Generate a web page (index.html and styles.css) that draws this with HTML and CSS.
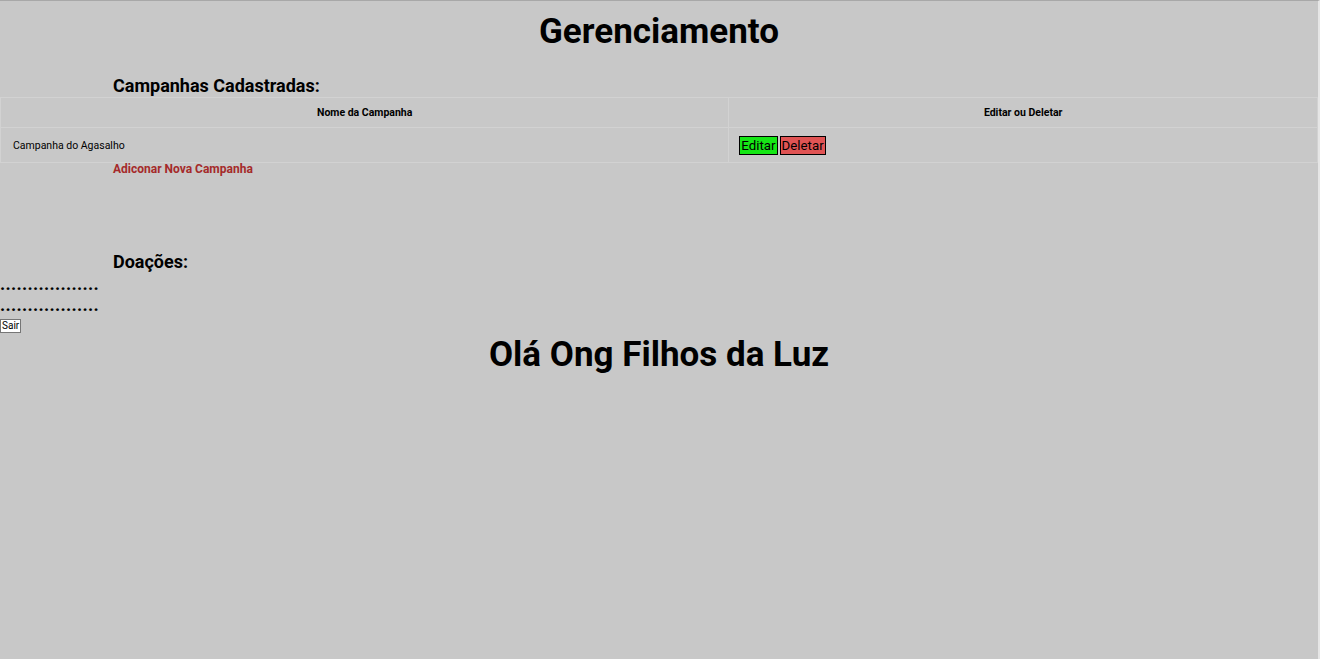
FILE: index.html
```html
<!DOCTYPE html>
<html lang="pt-BR">
<head>
<meta charset="utf-8">
<title>Gerenciamento</title>
<link rel="stylesheet" href="styles.css">
</head>
<body>
<div class="page">
  <h1 class="title">Gerenciamento</h1>
  <section class="campaigns">
    <h2 class="section-title">Campanhas Cadastradas:</h2>
    <table class="table">
      <thead>
        <tr>
          <th class="col-name">Nome da Campanha</th>
          <th class="col-actions">Editar ou Deletar</th>
        </tr>
      </thead>
      <tbody>
        <tr>
          <td class="cell-name">Campanha do Agasalho</td>
          <td class="cell-actions">
            <button class="btn btn-edit">Editar</button><button class="btn btn-delete">Deletar</button>
          </td>
        </tr>
      </tbody>
    </table>
    <a class="add-link" href="#">Adiconar Nova Campanha</a>
  </section>
  <section class="donations">
    <h2 class="section-title">Doações:</h2>
    <div class="dots">..................</div>
    <div class="dots">..................</div>
  </section>
  <button class="btn-exit">Sair</button>
  <h1 class="greeting">Olá Ong Filhos da Luz</h1>
</div>
</body>
</html>
```
FILE: styles.css
```css
html, body {
  margin: 0;
  padding: 0;
  background: #c8c8c8;
  height: 100%;
}
body {
  font-family: Roboto, "Liberation Sans", sans-serif;
  color: #000;
}
.page {
  min-height: 100%;
  box-sizing: border-box;
  border-top: 1px solid #a8a8a8;
  border-right: 2px solid #e6e6e6;
  padding-top: 1px;
}
.title {
  margin: 0;
  padding-top: 10px;
  text-align: center;
  font-size: 35px;
  font-weight: 700;
  line-height: 40px;
}
.section-title {
  margin: 0;
  padding-left: 113px;
  font-size: 18px;
  font-weight: 700;
  line-height: 22px;
}
.campaigns .section-title {
  margin-top: 23px;
}
.table {
  width: 100%;
  border-collapse: collapse;
  margin-top: 0;
}
.table th, .table td {
  border: 1px solid #d2d2d2;
}
.table th {
  font-size: 10.5px;
  font-weight: 700;
  height: 29px;
  padding: 0;
  text-align: center;
}
.col-name {
  width: 55.3%;
}
.table td {
  height: 34px;
  padding: 0 10px;
  font-size: 10.5px;
}
.cell-name {
  padding-left: 12px !important;
}
.btn {
  font-family: Roboto, "Liberation Sans", sans-serif;
  font-size: 13.3px;
  line-height: 17px;
  padding: 0 1px;
  border: 1px solid #000;
  margin: 0 2px 0 0;
  color: #000;
  vertical-align: middle;
}
.btn-edit {
  background: #16e616;
}
.btn-delete {
  background: #e05454;
}
.add-link {
  display: block;
  padding-left: 113px;
  margin-top: -1px;
  font-size: 12px;
  font-weight: 700;
  color: #a52a2a;
  text-decoration: none;
  line-height: 14px;
}
.donations .section-title {
  margin-top: 75px;
}
.dots {
  font-size: 18px;
  font-weight: 700;
  line-height: 21px;
  letter-spacing: 0.28px;
  width: 99px;
  overflow: hidden;
  white-space: nowrap;
}
.btn-exit {
  display: block;
  font-family: Roboto, "Liberation Sans", sans-serif;
  font-size: 10px;
  padding: 0 1px;
  background: #fff;
  border: 1px solid #767676;
  line-height: 12px;
  margin: 4px 0 0;
}
.greeting {
  margin: 0;
  padding-top: 2px;
  text-align: center;
  font-size: 35px;
  font-weight: 700;
  line-height: 40px;
}
```
